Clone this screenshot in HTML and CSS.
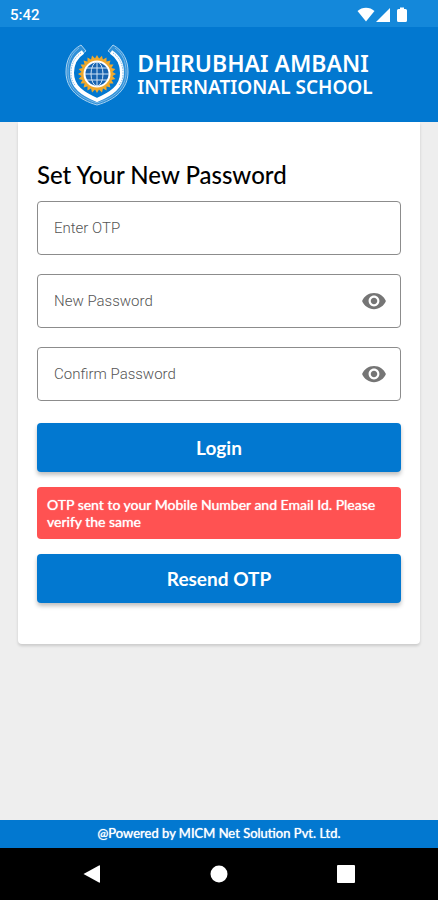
FILE: index.html
```html
<!DOCTYPE html>
<html lang="en">
<head>
    <meta charset="UTF-8">
    <meta name="viewport" content="width=device-width, initial-scale=1">
    <title>Set Your New Password</title>
    <link rel="stylesheet" href="styles.css">
</head>
<body>

<div class="status-bar">
    <span>5:42</span>
    <svg class="status-icons" width="52" height="18" viewBox="0 0 52 18" fill="#fff">
        <path d="M0.500 5C5 0.500 13 0.500 17.500 5L9 15.500z"/>
        <path d="M33 2v14H19z"/>
        <path d="M43 1.500h4V3h1.500q1.500 0 1.500 1.500v10q0 1.500-1.500 1.500h-7q-1.500 0-1.500-1.500v-10Q40 3 41.500 3H43z"/>
    </svg>
</div>

<header class="header">
    <svg class="logo" width="64" height="62" viewBox="0 0 64 62">
        <!-- wreath -->
        <path d="M16 1C5 7 1 17 1 28C1 45 14 56 32 61C50 56 63 45 63 28C63 17 59 7 48 1L43 7C51 12 56 19 56 29C56 42 46 49 32 55C18 49 8 42 8 29C8 19 13 12 21 7z" fill="#2d90d9" stroke="#a9d2f0" stroke-width="1"/>
        <path d="M18 8C10 13 7 20 7 29C7 43 18 50 32 56C46 50 57 43 57 29C57 20 54 13 46 8" fill="none" stroke="#fff" stroke-width="4"/>
        <path d="M14 4C6 10 3 18 3 28C3 44 15 54 32 59C49 54 61 44 61 28C61 18 58 10 50 4" fill="none" stroke="#79b8e8" stroke-width="1"/>
        <path d="M16 9C9 14 6 21 6 29C6 34 7 38 10 41M48 9C55 14 58 21 58 29C58 34 57 38 54 41" fill="none" stroke="#7fb9e6" stroke-width="1" stroke-dasharray="1.500 1"/>
        <!-- sun -->
        <g transform="translate(32 30)" fill="#f0a92c">
            <path id="ray" d="M0-19L16.500 9.500H-16.500z"/>
            <use href="#ray" transform="rotate(15)"/>
            <use href="#ray" transform="rotate(30)"/>
            <use href="#ray" transform="rotate(45)"/>
            <use href="#ray" transform="rotate(60)"/>
            <use href="#ray" transform="rotate(75)"/>
            <use href="#ray" transform="rotate(90)"/>
            <use href="#ray" transform="rotate(105)"/>
        </g>
        <!-- globe -->
        <g fill="none" stroke="#cfe3f5" stroke-width="1">
            <circle cx="32" cy="30" r="12.500" fill="#1763b0" stroke="#fff" stroke-width="2"/>
            <ellipse cx="32" cy="30" rx="6" ry="12"/>
            <path d="M32 18v24M20 30h24M22 24h20M22 36h20"/>
        </g>
    </svg>
    <div class="school">
        <div class="school-name">DHIRUBHAI AMBANI</div>
        <div class="school-type">INTERNATIONAL SCHOOL</div>
    </div>
</header>

<main class="content">
    <form class="card">
        <h1>Set Your New Password</h1>

        <div class="field">
            <input type="text" id="otp" placeholder="Enter OTP" aria-label="Enter OTP">
        </div>

        <div class="field">
            <input type="password" id="newPassword" placeholder="New Password" aria-label="New Password">
            <button type="button" class="btn-eye" aria-label="Show password" onclick="togglePassword('newPassword')">
                <svg width="26" height="26" viewBox="0 0 24 24"><path d="M12 4.500C7 4.500 2.730 7.610 1 12c1.730 4.390 6 7.500 11 7.500s9.270-3.110 11-7.500c-1.730-4.390-6-7.500-11-7.500zM12 17c-2.760 0-5-2.240-5-5s2.240-5 5-5 5 2.240 5 5-2.240 5-5 5zm0-8c-1.660 0-3 1.340-3 3s1.340 3 3 3 3-1.340 3-3-1.340-3-3-3z"/></svg>
            </button>
        </div>

        <div class="field">
            <input type="password" id="confirmPassword" placeholder="Confirm Password" aria-label="Confirm Password">
            <button type="button" class="btn-eye" aria-label="Show password" onclick="togglePassword('confirmPassword')">
                <svg width="26" height="26" viewBox="0 0 24 24"><path d="M12 4.500C7 4.500 2.730 7.610 1 12c1.730 4.390 6 7.500 11 7.500s9.270-3.110 11-7.500c-1.730-4.390-6-7.500-11-7.500zM12 17c-2.760 0-5-2.240-5-5s2.240-5 5-5 5 2.240 5 5-2.240 5-5 5zm0-8c-1.660 0-3 1.340-3 3s1.340 3 3 3 3-1.340 3-3-1.340-3-3-3z"/></svg>
            </button>
        </div>

        <button type="button" class="btn">Login</button>
        <p class="message">OTP sent to your Mobile Number and Email Id. Please verify the same</p>
        <button type="button" class="btn">Resend OTP</button>
    </form>
</main>

<footer class="footer">@Powered by MICM Net Solution Pvt. Ltd.</footer>

<nav class="nav-bar">
    <button type="button" aria-label="Back">
        <svg width="18" height="18" viewBox="0 0 18 18"><path d="M0.500 9L16 0.500Q17 0 17 1v16q0 1-1 0.500z"/></svg>
    </button>
    <button type="button" aria-label="Home">
        <svg width="18" height="18" viewBox="0 0 18 18"><circle cx="9" cy="9" r="8.500"/></svg>
    </button>
    <button type="button" aria-label="Recent apps">
        <svg width="18" height="18" viewBox="0 0 18 18"><rect width="18" height="18" rx="1"/></svg>
    </button>
</nav>

<script>
    function togglePassword(id) {
        const input = document.getElementById(id);
        input.type = input.type === 'password' ? 'text' : 'password';
    }
</script>

</body>
</html>
```
FILE: styles.css
```css
* {
    box-sizing: border-box;
}
body {
    font-family: Lato, sans-serif;
    background-color: #eeeeee;
    margin: 0;
    min-height: 100vh;
    display: flex;
    flex-direction: column;
}
svg {
    display: block;
}
button {
    font-family: inherit;
    border: none;
    padding: 0;
    cursor: pointer;
}
.status-bar {
    display: flex;
    justify-content: space-between;
    align-items: center;
    height: 27px;
    padding: 2px 29px 0 10px;
    background-color: #1488da;
    color: white;
    font-family: Roboto, sans-serif;
    font-size: 15px;
    font-weight: 500;
}
.header {
    display: flex;
    justify-content: center;
    align-items: center;
    gap: 8px;
    height: 95px;
    background-color: #0278d0;
    color: white;
}
.school {
    font-family: "Noto Sans", sans-serif;
    font-weight: 600;
}
.school-name {
    font-size: 23px;
    line-height: 25px;
}
.school-type {
    font-size: 19px;
    line-height: 23px;
}
.content {
    flex: 1;
    padding: 0 18px;
}
.card {
    background: white;
    padding: 38px 19px 41px;
    border-radius: 0 0 4px 4px;
    box-shadow: 0 2px 3px rgba(0,0,0,0.15);
}
.card h1 {
    margin: 0 0 11px;
    font-size: 24px;
    line-height: 30px;
    font-weight: 500;
    color: black;
}
.field {
    display: flex;
    align-items: center;
    height: 54px;
    margin-bottom: 19px;
    padding: 0 13px 0 16px;
    border: 1px solid #8c8c8c;
    border-radius: 4px;
}
.field input {
    flex: 1;
    min-width: 0;
    padding: 0 0 1px;
    border: none;
    outline: none;
    background: none;
    font-family: Roboto, sans-serif;
    font-size: 15px;
    font-weight: 300;
}
.field input::placeholder {
    color: #555;
}
.btn-eye {
    background: none;
}
.btn-eye svg {
    fill: #757575;
}
.btn {
    display: block;
    width: 100%;
    height: 49px;
    margin-top: 22px;
    background-color: #0278d0;
    color: white;
    border-radius: 4px;
    font-size: 19px;
    font-weight: bold;
    box-shadow: 0 3px 4px rgba(0,0,0,0.25);
}
.message {
    margin: 15px 0;
    padding: 9px 10px;
    background-color: #ff5252;
    color: white;
    border-radius: 4px;
    font-size: 14px;
    line-height: 17px;
    font-weight: 400;
    text-shadow: 0 0 1px white;
}
.message + .btn {
    margin-top: 0;
}
.footer {
    height: 28px;
    line-height: 27px;
    background-color: #0278d0;
    color: white;
    text-align: center;
    font-size: 13px;
    font-weight: 400;
    text-shadow: 0 0 1px white;
}
.nav-bar {
    display: flex;
    justify-content: space-between;
    align-items: center;
    height: 52px;
    padding: 0 83px;
    background-color: black;
}
.nav-bar button {
    background: none;
}
.nav-bar svg {
    fill: white;
}
```
